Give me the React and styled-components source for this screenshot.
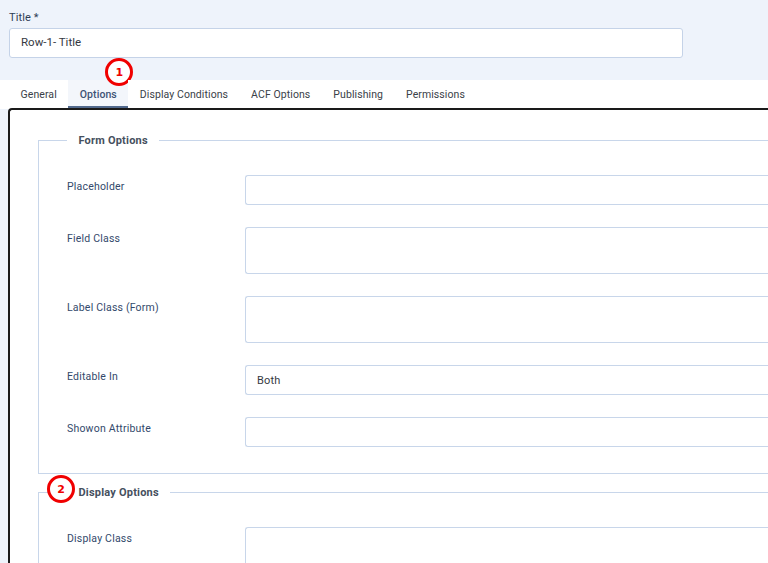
import styled, { createGlobalStyle } from "styled-components";

const GlobalStyle = createGlobalStyle`
  html, body {
    margin: 0;
    padding: 0;
    height: 563px;
    overflow: hidden;
    background: #eef3fb;
    font-family: Roboto, "Liberation Sans", sans-serif;
  }
`;

const Page = styled.div`
  width: 768px;
  height: 563px;
  overflow: hidden;
`;

const TitleArea = styled.div`
  padding: 11px 0 22px 9px;
`;

const TitleLabel = styled.label`
  display: block;
  font-size: 11px;
  line-height: 13px;
  margin-bottom: 4px;
  color: #2f3d55;
  letter-spacing: 0.1px;
`;

const TitleInput = styled.div`
  box-sizing: border-box;
  width: 673.5px;
  height: 30px;
  padding: 0 11px 2px;
  display: flex;
  align-items: center;
  background: #fff;
  border: 1px solid #c5d3e8;
  border-radius: 3px;
  font-size: 11.5px;
  color: #35393f;
`;

const TabBar = styled.div`
  display: flex;
  height: 29px;
  padding-left: 9px;
  background: #fff;
`;

const Tab = styled.div`
  position: relative;
  box-sizing: border-box;
  height: 28px;
  padding: 2px 11.5px 0;
  display: flex;
  align-items: center;
  font-size: 10.5px;
  letter-spacing: 0.08px;
  font-weight: ${(props) => (props.$active ? 500 : 400)};
  color: ${(props) => (props.$active ? "#3d5275" : "#3a4148")};
  background: ${(props) => (props.$active ? "#f3f6fb" : "#fff")};
  border-bottom: 2px solid ${(props) => (props.$active ? "#51698d" : "transparent")};
`;

const Panel = styled.div`
  box-sizing: border-box;
  margin: -1px 0 0 8px;
  height: 460px;
  padding: 24px 0 0 28px;
  background: #fff;
  border: 2px solid #1a1a1a;
  border-right: 0;
  border-bottom: 0;
  border-top-left-radius: 4px;
`;

const Group = styled.fieldset`
  position: relative;
  margin: 0 0 12px;
  padding: 28px 0 26px 28px;
  border: 1px solid #c8d6ea;
  border-right: 0;
`;

const Legend = styled.legend`
  position: relative;
  padding: 0 11px 0 11.5px;
  font-size: 11px;
  font-weight: 700;
  letter-spacing: 0.2px;
  color: #46505e;
`;

const Row = styled.div`
  display: grid;
  grid-template-columns: 178px 1fr;
  margin-bottom: 22px;

  &:last-child {
    margin-bottom: 0;
  }
`;

const FieldLabel = styled.label`
  padding-top: 4.5px;
  font-size: 10.5px;
  line-height: 13px;
  letter-spacing: 0.2px;
  color: #33496b;
`;

const Field = styled.div`
  box-sizing: border-box;
  height: ${(props) => (props.$tall ? "47px" : "30px")};
  padding: 0 11px;
  display: flex;
  align-items: center;
  background: #fff;
  border: 1px solid #c8d6ea;
  border-right: 0;
  border-radius: 3px 0 0 3px;
  font-size: 11px;
  letter-spacing: 0.2px;
  color: #35393f;
`;

const Badge = styled.span`
  position: absolute;
  left: ${(props) => props.$left}px;
  top: ${(props) => props.$top}px;
  box-sizing: border-box;
  width: 28px;
  height: 28px;
  display: flex;
  align-items: center;
  justify-content: center;
  background: #fff;
  border: 3px solid #f00000;
  border-radius: 50%;
  font-family: "DejaVu Sans", sans-serif;
  font-size: 11px;
  font-weight: 700;
  letter-spacing: 0;
  color: #f00000;
`;

const tabs = ["General", "Options", "Display Conditions", "ACF Options", "Publishing", "Permissions"];

export default function App() {
  return (
    <Page>
      <GlobalStyle />
      <TitleArea>
        <TitleLabel>Title *</TitleLabel>
        <TitleInput>Row-1- Title</TitleInput>
      </TitleArea>
      <TabBar>
        {tabs.map((tab) => (
          <Tab key={tab} $active={tab === "Options"}>
            {tab}
            {tab === "Options" && <Badge $left={37} $top={-22}>1</Badge>}
          </Tab>
        ))}
      </TabBar>
      <Panel>
        <Group>
          <Legend>Form Options</Legend>
          <Row>
            <FieldLabel>Placeholder</FieldLabel>
            <Field />
          </Row>
          <Row>
            <FieldLabel>Field Class</FieldLabel>
            <Field $tall />
          </Row>
          <Row>
            <FieldLabel>Label Class (Form)</FieldLabel>
            <Field $tall />
          </Row>
          <Row>
            <FieldLabel>Editable In</FieldLabel>
            <Field>Both</Field>
          </Row>
          <Row>
            <FieldLabel>Showon Attribute</FieldLabel>
            <Field />
          </Row>
        </Group>
        <Group>
          <Legend>
            <Badge $left={-20} $top={-11}>2</Badge>
            Display Options
          </Legend>
          <Row>
            <FieldLabel>Display Class</FieldLabel>
            <Field $tall />
          </Row>
        </Group>
      </Panel>
    </Page>
  );
}
